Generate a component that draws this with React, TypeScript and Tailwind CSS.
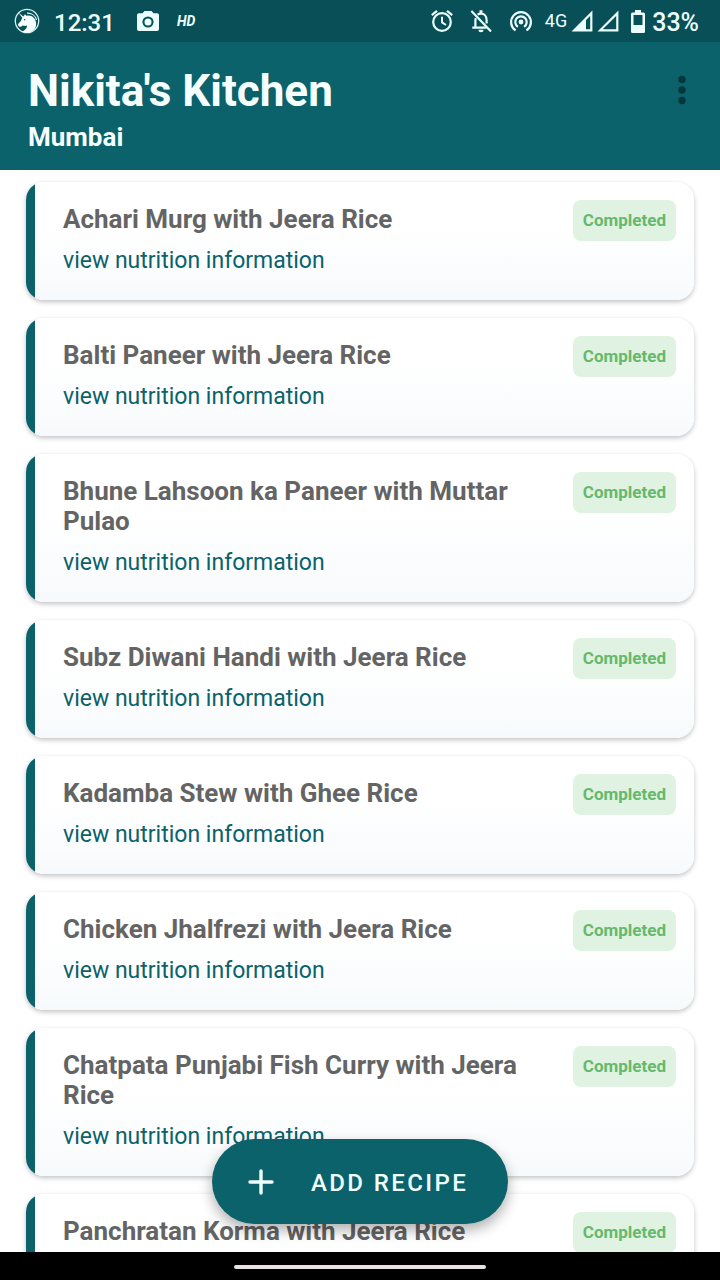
import React from "react";

const recipes: string[] = [
  "Achari Murg with Jeera Rice",
  "Balti Paneer with Jeera Rice",
  "Bhune Lahsoon ka Paneer with Muttar Pulao",
  "Subz Diwani Handi with Jeera Rice",
  "Kadamba Stew with Ghee Rice",
  "Chicken Jhalfrezi with Jeera Rice",
  "Chatpata Punjabi Fish Curry with Jeera Rice",
  "Panchratan Korma with Jeera Rice",
];

function UnicornIcon() {
  return (
    <svg viewBox="0 0 26 26" className="size-[26px]" aria-hidden="true">
      <circle cx="13" cy="13" r="11.7" fill="none" stroke="#d5f1f2" strokeWidth="1.3" />
      <path
        fill="#f4ffff"
        d="M4.200 4.600 9.400 8.600 11 6.200l1.400 1.600c3.200-.8 6.200.2 8 2.600 2 2.700 2.300 6.500.8 9.600-1.900 3-5 4.700-8.400 4.700-1.700 0-3.300-.4-4.700-1.100 3-1.100 4.900-3.300 5-6-1.700.5-3.200.3-4.500-.2-.9 1-2 1.600-3 1.300-1.300-.3-1.900-1.500-1.400-2.600.6-1.300 2.300-2.200 2.900-3.600.4-.9.500-1.900 1.200-2.800Z"
      />
      <path d="M13 5.200c4.700-.3 8.400 2.500 9.500 6.800" fill="none" stroke="#d5f1f2" strokeWidth="1.200" />
      <circle cx="10.600" cy="11.800" r="0.700" fill="#0a525a" />
    </svg>
  );
}

function CameraIcon() {
  return (
    <svg viewBox="0 0 22 20" className="h-5 w-[22px]" aria-hidden="true">
      <path
        fill="currentColor"
        fillRule="evenodd"
        d="M7.500 0h7l2 2.200H20a2 2 0 0 1 2 2V18a2 2 0 0 1-2 2H2a2 2 0 0 1-2-2V4.200a2 2 0 0 1 2-2h3.500l2-2.200ZM11 5.400a5.600 5.600 0 1 0 0 11.200 5.600 5.600 0 0 0 0-11.200Z"
      />
      <circle cx="11" cy="11" r="3.500" fill="currentColor" />
    </svg>
  );
}

function AlarmIcon() {
  return (
    <svg viewBox="0 0 26 26" className="size-[26px]" fill="none" stroke="currentColor" strokeWidth="2.200" aria-hidden="true">
      <circle cx="13" cy="14" r="8.800" />
      <path d="M13 8.800v5.600l4 2.600" strokeWidth="2" />
      <path d="M2.800 7.200 8 2.900M23.200 7.200 18 2.900" />
    </svg>
  );
}

function BellOffIcon() {
  return (
    <svg viewBox="0 0 26 26" className="size-[26px]" fill="none" stroke="currentColor" strokeWidth="2.200" aria-hidden="true">
      <path d="M3.400 3 23 23.400" />
      <path d="M7.800 10.200c-.3.900-.4 1.800-.4 2.800v6.600M4.300 19.600h14.400" />
      <path d="M9.600 6.700C10.600 6 11.700 5.600 13 5.600c3.300 0 5.600 2.600 5.600 6.400v3.600" />
      <path d="M13 2.300v3" strokeWidth="3" />
      <path d="M10.500 21.800h5a2.500 2.500 0 0 1-5 0Z" fill="currentColor" stroke="none" />
    </svg>
  );
}

function HotspotIcon() {
  return (
    <svg viewBox="0 0 26 26" className="size-[26px]" fill="none" stroke="currentColor" strokeWidth="2.200" aria-hidden="true">
      <path d="M7.600 22.400a9.900 9.900 0 1 1 10.800 0" />
      <path d="M9.900 18.800a5.700 5.700 0 1 1 6.200 0" />
      <circle cx="13" cy="14" r="2.400" fill="currentColor" stroke="none" />
    </svg>
  );
}

function SignalIcon({ filled }: { filled?: boolean }) {
  return (
    <svg viewBox="0 0 22 22" className="size-[22px]" aria-hidden="true">
      <path d="M20.300 3.200V20.300H3.200Z" fill="none" stroke="currentColor" strokeWidth="2.200" />
      {filled && <path d="M15 8v13H2Z" fill="currentColor" />}
    </svg>
  );
}

function BatteryIcon() {
  return (
    <svg viewBox="0 0 14 23" className="h-[23px] w-3.5" aria-hidden="true">
      <path
        fill="currentColor"
        fillRule="evenodd"
        d="M4 0h6v2.500h2.500A1.500 1.500 0 0 1 14 4v17.500a1.500 1.500 0 0 1-1.500 1.500h-11A1.500 1.500 0 0 1 0 21.500V4a1.500 1.500 0 0 1 1.500-1.500H4ZM2.500 5v10h9V5Z"
      />
    </svg>
  );
}

function StatusBar() {
  return (
    <div className="flex h-[42px] shrink-0 items-center justify-between bg-[#084f57] pr-[21px] pl-3.5 text-[#ecffff]">
      <div className="flex items-center">
        <UnicornIcon />
        <span className="ml-3.5 pt-[3px] text-2xl leading-8 font-medium">12:31</span>
        <span className="ml-[22px]">
          <CameraIcon />
        </span>
        <span className="ml-[18px] text-sm font-bold italic">HD</span>
      </div>
      <div className="flex items-center">
        <AlarmIcon />
        <span className="ml-[13px]">
          <BellOffIcon />
        </span>
        <span className="ml-[14px]">
          <HotspotIcon />
        </span>
        <span className="ml-[11px] text-lg">4G</span>
        <span className="ml-1 flex gap-1">
          <SignalIcon filled />
          <SignalIcon />
        </span>
        <span className="ml-3">
          <BatteryIcon />
        </span>
        <span className="ml-[7px] pt-[3px] text-[25px] leading-8 font-medium">33%</span>
      </div>
    </div>
  );
}

function Header() {
  return (
    <header className="flex h-32 shrink-0 items-start justify-between bg-[#0b626b] pt-6 pr-6 pl-7 text-[#f6ffff]">
      <div>
        <h1 className="text-[44px] leading-[50px] font-bold">Nikita's Kitchen</h1>
        <p className="text-[26px] leading-[42px] font-bold">Mumbai</p>
      </div>
      <button type="button" aria-label="More options" className="mt-2 flex h-8 w-7 items-center justify-center text-[#06363c]">
        <svg viewBox="0 0 8 30" className="h-[30px] w-2" fill="currentColor" aria-hidden="true">
          <circle cx="4" cy="4.500" r="3.700" />
          <circle cx="4" cy="15" r="3.700" />
          <circle cx="4" cy="25.500" r="3.700" />
        </svg>
      </button>
    </header>
  );
}

function RecipeCard({ name }: { name: string }) {
  return (
    <li className="flex shrink-0 overflow-hidden rounded-[18px] bg-linear-to-b from-white from-40% to-[#f7fafc] shadow-[0_2px_5px_rgba(0,0,0,0.24)]">
      <div className="w-[9px] shrink-0 bg-[#0b626b]" />
      <div className="flex grow items-start justify-between gap-6 pt-[18px] pr-[18px] pb-[23px] pl-7">
        <div className="pt-1">
          <h2 className="text-[26px] leading-[30px] font-bold text-[#646464]">{name}</h2>
          <a href="#nutrition" className="mt-[11px] block text-[23px] leading-8 text-[#0b626b]">
            view nutrition information
          </a>
        </div>
        <span className="shrink-0 rounded-lg bg-[#e0f2e2] px-2.5 text-[17px] leading-[41px] font-bold text-[#66b96c]">
          Completed
        </span>
      </div>
    </li>
  );
}

export default function App() {
  return (
    <div className="flex h-screen flex-col bg-white font-['Roboto',sans-serif]">
      <StatusBar />
      <Header />
      <main className="relative flex min-h-0 flex-1 flex-col">
        <ul className="flex min-h-0 flex-1 flex-col gap-[18px] overflow-y-auto px-[26px] pt-3 [scrollbar-width:none]">
          {recipes.map((name) => (
            <RecipeCard key={name} name={name} />
          ))}
        </ul>
        <div className="absolute inset-x-0 bottom-7 flex justify-center">
          <button
            type="button"
            className="flex h-[85px] items-center gap-[37px] rounded-full bg-[#0b626b] pr-10 pl-9 text-2xl font-medium tracking-widest text-[#f0ffff] shadow-[0_6px_14px_rgba(0,0,0,0.32)]"
          >
            <svg viewBox="0 0 26 26" className="size-[26px]" aria-hidden="true">
              <path d="M13 2v22M2 13h22" stroke="currentColor" strokeWidth="3.400" strokeLinecap="round" />
            </svg>
            <span className="pt-0.5">ADD RECIPE</span>
          </button>
        </div>
      </main>
      <div className="flex h-7 shrink-0 items-center justify-center bg-black">
        <div className="mt-0.5 h-1 w-[35%] rounded-full bg-[#e8e2e4]" />
      </div>
    </div>
  );
}
